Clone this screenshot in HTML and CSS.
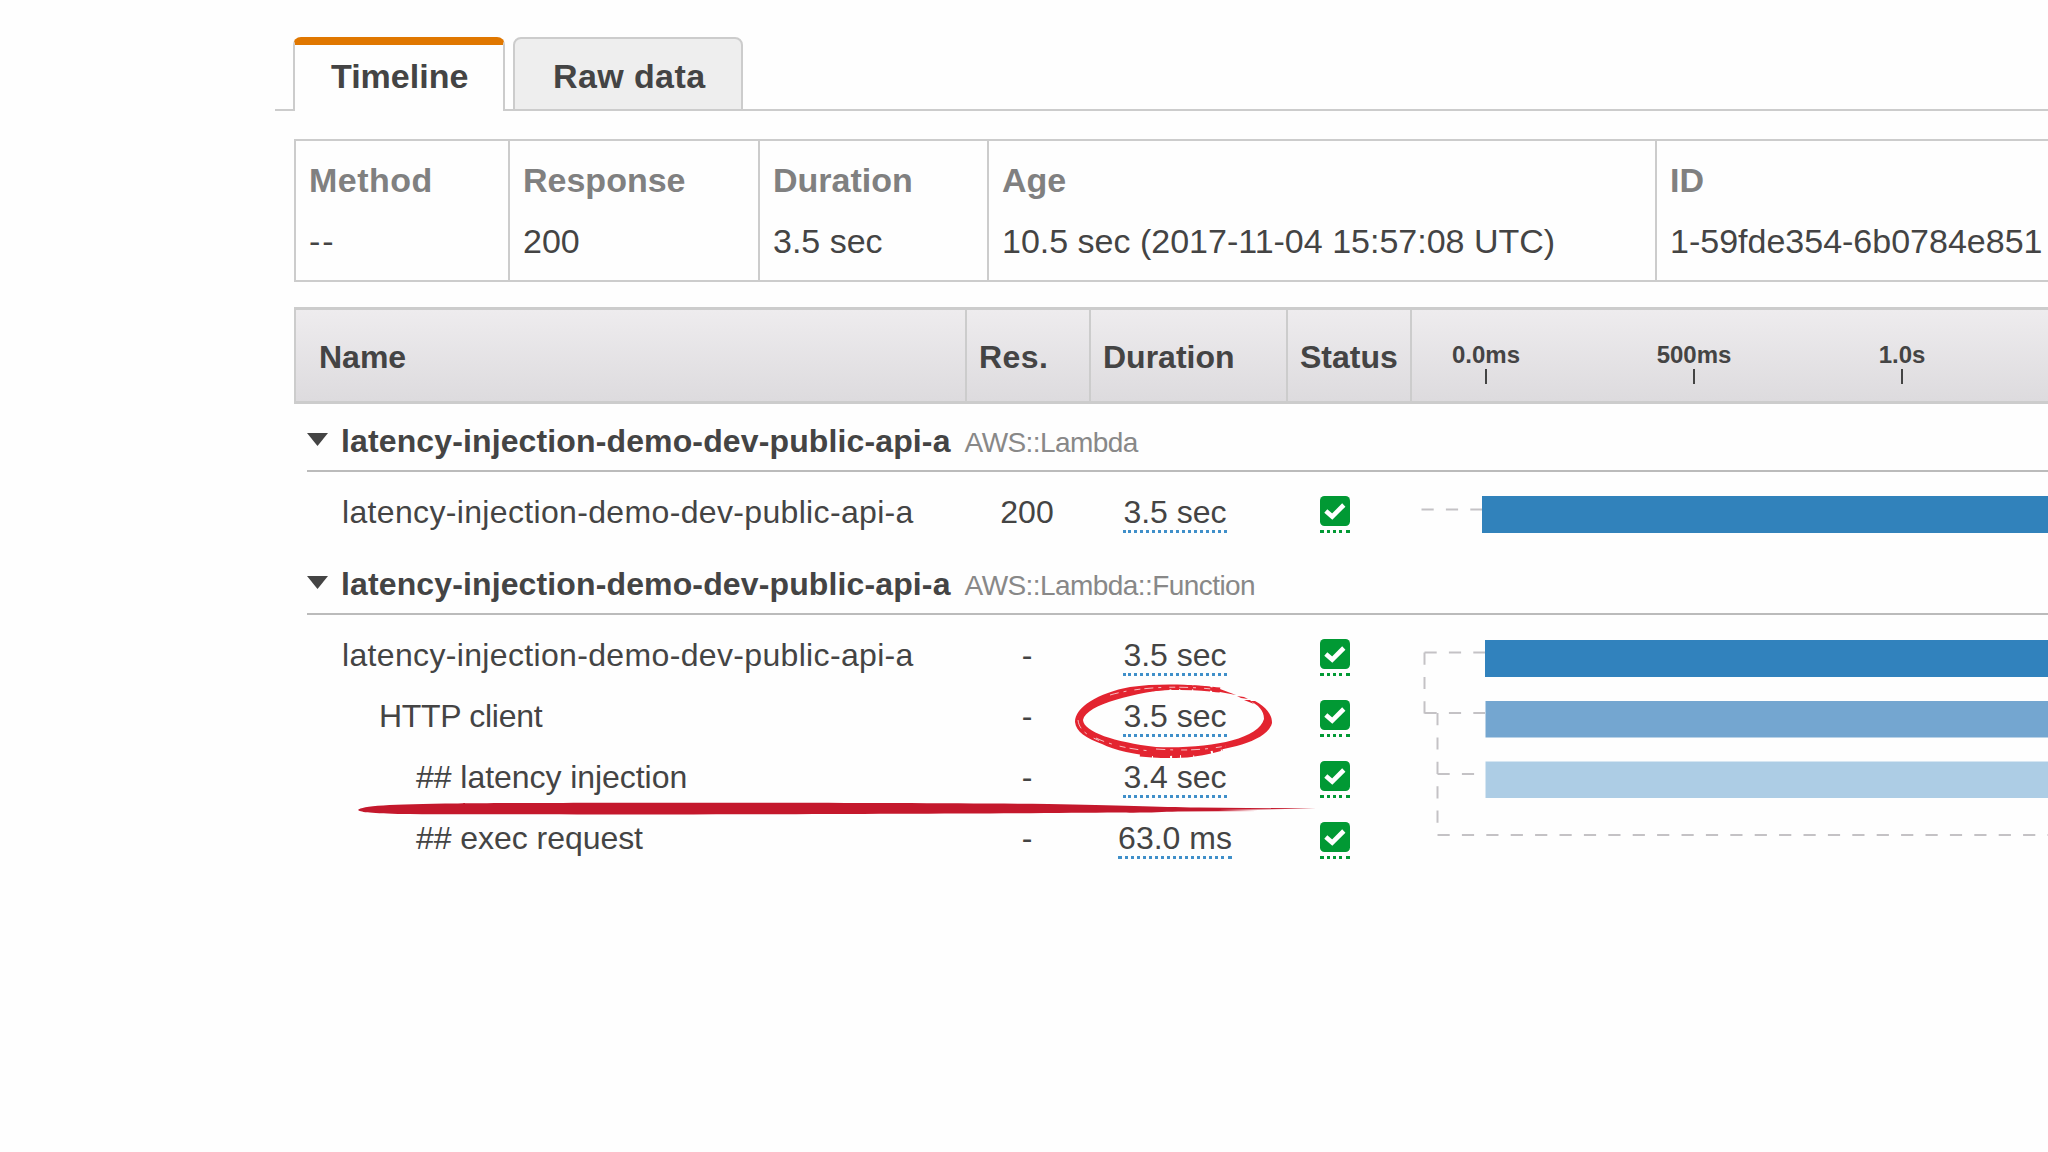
FILE: index.html
```html
<!DOCTYPE html>
<html lang="en">
<head>
    <meta charset="UTF-8">
    <meta name="viewport" content="width=device-width, initial-scale=1.0">
    <title>Trace timeline</title>
    <link rel="stylesheet" href="styles.css">
</head>
<body>
    <svg class="defs" width="0" height="0">
        <symbol id="check" viewBox="0 0 30 30">
            <rect width="30" height="30" rx="4.5" fill="#019934"/>
            <path d="M5.8 15 L12.2 20.6 L23.8 9" fill="none" stroke="#fff" stroke-width="4.6"/>
        </symbol>
    </svg>

    <div class="page">
        <div class="tabs">
            <div class="tab active">Timeline</div>
            <div class="tab">Raw data</div>
        </div>

        <div class="summary">
            <div class="cell method"><b>Method</b><span>--</span></div>
            <div class="cell"><b>Response</b><span>200</span></div>
            <div class="cell"><b>Duration</b><span>3.5 sec</span></div>
            <div class="cell"><b>Age</b><span>10.5 sec (2017-11-04 15:57:08 UTC)</span></div>
            <div class="cell"><b>ID</b><span>1-59fde354-6b0784e851</span></div>
        </div>

        <div class="trace">
            <div class="header">
                <div class="col">Name</div>
                <div class="col res-col">Res.</div>
                <div class="col">Duration</div>
                <div class="col">Status</div>
                <div class="scale">
                    <span>0.0ms</span>
                    <span>500ms</span>
                    <span>1.0s</span>
                </div>
            </div>

            <div class="group">
                <div class="group-title">
                    <i class="arrow"></i><b>latency-injection-demo-dev-public-api-a</b><span class="type">AWS::Lambda</span>
                </div>
                <div class="group-body">
                    <div class="rows">
                        <div class="row">
                            <div class="name level-0">latency-injection-demo-dev-public-api-a</div>
                            <div class="res">200</div>
                            <div class="duration"><span>3.5 sec</span></div>
                            <div class="status"><span><svg><use href="#check"/></svg></span></div>
                        </div>
                    </div>
                    <svg class="chart" width="638" height="72">
                        <path class="link" d="M11.5 37.5 H72"/>
                        <rect x="72" y="24" width="566" height="37" fill="#3182bb"/>
                    </svg>
                </div>
            </div>

            <div class="group">
                <div class="group-title">
                    <i class="arrow"></i><b>latency-injection-demo-dev-public-api-a</b><span class="type">AWS::Lambda::Function</span>
                </div>
                <div class="group-body">
                    <div class="rows">
                        <div class="row">
                            <div class="name level-0">latency-injection-demo-dev-public-api-a</div>
                            <div class="res">-</div>
                            <div class="duration"><span>3.5 sec</span></div>
                            <div class="status"><span><svg><use href="#check"/></svg></span></div>
                        </div>
                        <div class="row">
                            <div class="name level-1">HTTP client</div>
                            <div class="res">-</div>
                            <div class="duration">
                                <span>3.5 sec</span>
                                <svg class="circle" width="204" height="84" viewBox="0 0 204 84">
                                    <path class="brush" d="M1 44 C1 29 24 15 56 9 C84 5 126 6 146 11 L162 17 L146 14 C126 11 116 11 100 11 C64 14 12 26 9 42 C10 54 40 64 82 69 C134 71 184 62 190 41 C190 32 184 27 176 23 L181 23 C192 29 198 36 198 45 C194 62 158 71 130 74 L118 78 L104 77 L88 79 C60 77 40 72 28 66 C12 60 2 54 1 44 Z"/>
                                    <path class="brush" d="M163 18 L170 19 L174 21 L167 20 Z M170 22 L176 22 L180 26 Z"/>
                                    <path class="rough" d="M26 23 C54 11 96 6 146 12"/>
                                    <path class="rough" d="M66 76 C96 79 122 78 148 70"/>
                                    <path class="bristle" d="M36 17 C60 10 96 7 138 11"/>
                                    <path class="bristle" d="M22 60 C38 68 62 72 78 73"/>
                                    <path class="bristle" d="M4 42 C5 52 14 58 26 63"/>
                                    <path class="bristle" d="M82 71 C110 73 130 72 152 68"/>
                                </svg>
                            </div>
                            <div class="status"><span><svg><use href="#check"/></svg></span></div>
                        </div>
                        <div class="row">
                            <div class="name level-2">## latency injection
                                <svg class="stroke" width="962" height="14" viewBox="0 0 962 14">
                                    <path d="M0 8 C4 4 30 2 100 1.5 C180 0.5 500 0.5 690 2 C760 3 800 5 840 5.5 L958 6.5 L860 8 L900 9 L820 9.5 C800 10 790 11 760 10.5 C600 12 200 13 40 12 C10 11 2 10 0 8 Z"/>
                                </svg>
                            </div>
                            <div class="res">-</div>
                            <div class="duration"><span>3.4 sec</span></div>
                            <div class="status"><span><svg><use href="#check"/></svg></span></div>
                        </div>
                        <div class="row">
                            <div class="name level-2">## exec request</div>
                            <div class="res">-</div>
                            <div class="duration"><span>63.0 ms</span></div>
                            <div class="status"><span><svg><use href="#check"/></svg></span></div>
                        </div>
                    </div>
                    <svg class="chart" width="638" height="255">
                        <path class="link" d="M14.5 37.5 H75"/>
                        <path class="link" d="M14.5 37.5 V98.5"/>
                        <path class="link" d="M14.5 98 H75"/>
                        <path class="link" d="M27.5 98 V220"/>
                        <path class="link" d="M27.5 159 H75"/>
                        <path class="link" d="M27.5 220 H638"/>
                        <rect x="75" y="25" width="563" height="37" fill="#3182bd"/>
                        <rect x="75.5" y="86" width="563" height="36.5" fill="#74a6d0"/>
                        <rect x="75.5" y="146.5" width="563" height="36.5" fill="#adcde5"/>
                    </svg>
                </div>
            </div>
        </div>
    </div>
</body>
</html>
```
FILE: styles.css
```css
* {
    box-sizing: border-box;
}
body {
    margin: 0;
    background-color: #fefefe;
    color: #444;
    font-family: "Liberation Sans", Arial, sans-serif;
    font-size: 32px;
    overflow: hidden;
}
.defs {
    display: block;
}
.page {
    width: 2048px;
    height: 1152px;
    overflow: hidden;
    padding: 37px 0 0 275px;
}
.tabs {
    display: flex;
    gap: 8px;
    height: 74px;
    padding-left: 18px;
    background: linear-gradient(#ccc, #ccc) bottom / 100% 2px no-repeat;
}
.tab {
    height: 74px;
    padding: 0 38px;
    border: 2px solid #ccc;
    border-radius: 8px 8px 0 0;
    background-color: #eee;
    font-size: 34px;
    font-weight: bold;
    letter-spacing: 0.4px;
    line-height: 74px;
    white-space: nowrap;
    width: 230px;
}
.tab.active {
    width: 212px;
    padding: 0 36px;
    border-top: 8px solid #e07700;
    border-bottom: none;
    background-color: #fefefe;
    letter-spacing: 0;
    line-height: 62px;
}
.summary {
    display: grid;
    grid-template-columns: 214px 250px 229px 668px 400px;
    height: 143px;
    margin: 28px 0 0 19px;
    border: 2px solid #ccc;
    border-right: none;
}
.cell {
    padding: 19px 13px 0;
    border-right: 2px solid #ccc;
    font-size: 34px;
    line-height: 40px;
    white-space: nowrap;
}
.cell:last-child {
    border-right: none;
}
.cell b {
    display: block;
    margin-bottom: 21px;
    color: #808080;
}
.method b {
    letter-spacing: 0.5px;
}
.method span {
    letter-spacing: 2px;
}
.trace {
    margin: 25px 0 0 19px;
}
.header {
    display: grid;
    grid-template-columns: 671px 124px 197px 124px 1fr;
    height: 97px;
    padding-bottom: 4px;
    border: 3px solid #ccc;
    border-width: 3px 0 3px 2px;
    background: linear-gradient(#eeecee, #dddbde);
    font-weight: bold;
}
.col {
    padding-left: 12px;
    border-right: 2px solid #ccc;
    line-height: 94px;
}
.col:first-child {
    padding-left: 23px;
}
.res-col {
    letter-spacing: 0.4px;
}
.scale {
    display: flex;
    font-size: 24px;
    line-height: 28px;
    padding-top: 31px;
    margin-left: -30px;
}
.scale span {
    width: 208px;
    text-align: center;
}
.scale span::after {
    content: "";
    display: block;
    width: 2px;
    height: 15px;
    margin: 0 auto;
    background-color: #444;
}
.group {
    height: 143px;
}
.group-title {
    display: flex;
    align-items: baseline;
    height: 68px;
    margin-left: 13px;
    padding-top: 19px;
    border-bottom: 2px solid #bbb;
    white-space: nowrap;
}
.group-title b {
    letter-spacing: 0.13px;
}
.arrow {
    width: 21px;
    height: 13px;
    margin-right: 13px;
    background-color: #444;
    clip-path: polygon(0 0, 100% 0, 50% 100%);
    position: relative;
    top: -6px;
}
.type {
    margin-left: 14px;
    color: #888;
    font-size: 28px;
    letter-spacing: -0.57px;
}
.group-body {
    display: flex;
}
.rows {
    width: 1116px;
    padding-top: 18px;
}
.row {
    display: grid;
    grid-template-columns: 671px 124px 172px 148px;
    height: 61px;
    line-height: 44px;
}
.name {
    position: relative;
}
.level-0 {
    padding-left: 48px;
    letter-spacing: 0.34px;
}
.level-1 {
    padding-left: 85px;
    letter-spacing: -0.3px;
}
.level-2 {
    padding-left: 122px;
    letter-spacing: -0.05px;
}
.res,
.duration,
.status {
    position: relative;
    text-align: center;
}
.duration span {
    display: inline-block;
    height: 43px;
    border-bottom: 3px dotted #3f8fc9;
}
.status span {
    display: inline-block;
    height: 37px;
    margin-top: 6px;
    border-bottom: 3px dotted #019934;
}
.status svg {
    display: block;
    width: 30px;
    height: 30px;
}
.link {
    fill: none;
    stroke: #c4c2c5;
    stroke-width: 2;
    stroke-dasharray: 12.2 12.2;
}
.circle {
    position: absolute;
    left: -15px;
    top: -16px;
}
.brush {
    fill: #e32430;
}
.bristle,
.rough {
    fill: none;
    stroke: #fefefe;
    stroke-width: 0.7;
    stroke-dasharray: 9 5 3 8 6 4;
}
.rough {
    stroke: #e32430;
    stroke-width: 5;
    stroke-dasharray: 12 1 17 2 8 1;
}
.stroke {
    position: absolute;
    left: 64px;
    top: 47px;
    z-index: 1;
    fill: #c4182c;
}
```
